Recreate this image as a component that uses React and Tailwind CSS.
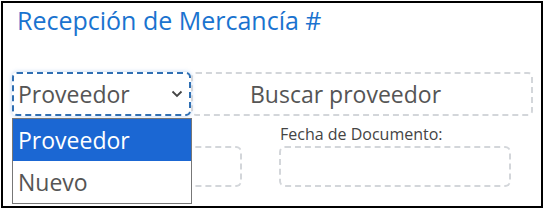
import React from "react";

export default function App() {
  return (
    <div className="w-[544px] h-[209px] bg-white p-px" style={{ fontFamily: '"Open Sans", sans-serif' }}>
      <div className="relative h-full border-2 border-black bg-white">
        <h1 className="pl-[14px] pt-[1px] text-[25px] leading-[32px] text-[#1a73cf]">Recepción de Mercancía #</h1>
        <div className="mt-[36px] flex pl-[9px]">
          <div className="flex h-[44px] w-[179px] items-center justify-between rounded-[5px] border-2 border-dashed border-[#2f6fb3] pl-[4px] pr-[6px] shadow-[0_0_4px_rgba(60,130,220,0.35)]">
            <span className="text-[23px] text-[#555]">Proveedor</span>
            <svg width="12" height="8" viewBox="0 0 12 8" fill="none">
              <path d="M1.5 1.5L6 6L10.5 1.5" stroke="#444" strokeWidth="1.8" />
            </svg>
          </div>
          <div className="flex h-[44px] w-[342px] items-center rounded-[5px] border-2 border-dashed border-[#d3d6da] pl-[57px]">
            <span className="text-[23px] text-[#555]">Buscar proveedor</span>
          </div>
        </div>
        <div className="mt-[8px] flex pl-[17px]">
          <div className="w-[222px]">
            <div className="h-[20px]"></div>
            <div className="mt-[2px] h-[41px] rounded-[6px] border-2 border-dashed border-[#d3d6da]"></div>
          </div>
          <div className="ml-[37px] w-[232px]">
            <div className="pl-px text-[16px] leading-[20px] text-[#444]">Fecha de Documento:</div>
            <div className="mt-[2px] h-[41px] rounded-[6px] border-2 border-dashed border-[#d3d6da]"></div>
          </div>
        </div>
        <div className="absolute left-[9px] top-[115px] w-[180px] border border-[#777] bg-white">
          <div className="flex h-[42px] items-center bg-[#1b67d3] pl-[5px] text-[23px] text-white">Proveedor</div>
          <div className="flex h-[42px] items-center pl-[5px] text-[23px] text-[#555]">Nuevo</div>
        </div>
      </div>
    </div>
  );
}
